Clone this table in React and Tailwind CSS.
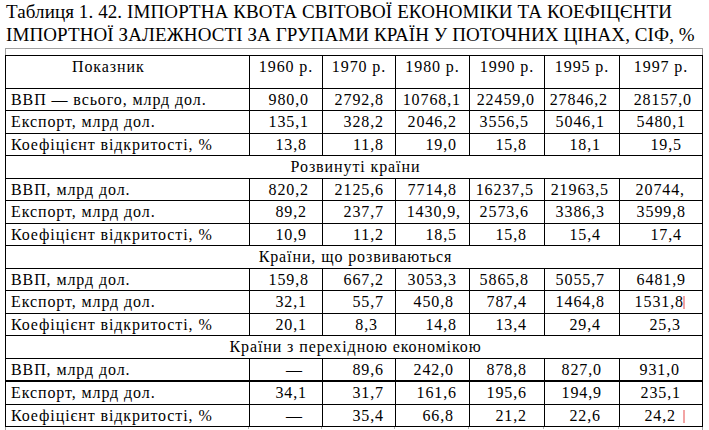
import React from "react";

const GRID = "grid grid-cols-[244px_73px_73px_74px_75px_75px_83px]";
const DEF = ["pr-[13px]", "pr-[11px]", "pr-[12px]", "pr-[15px]", "pr-[14px]", "pr-[16px]"];

const years = ["1960 р.", "1970 р.", "1980 р.", "1990 р.", "1995 р.", "1997 р."];

const sections = [
  {
    title: null,
    rows: [
      { label: "ВВП — всього, млрд дол.", h: "h-[22px]", vals: ["980,0", "2792,8", ["10768,1", "pr-[8px]"], ["22459,0", "pr-[9px]"], ["27846,2", "pr-[11px]"], ["28157,0", "pr-[10px]"]] },
      { label: "Експорт, млрд дол.", h: "h-[23px]", vals: ["135,1", "328,2", "2046,2", "3556,5", "5046,1", "5480,1"] },
      { label: "Коефіцієнт відкритості, %", h: "h-[22px]", vals: [["13,8", "pr-[15px]"], "11,8", "19,0", ["15,8", "pr-[17px]"], ["18,1", "pr-[18px]"], ["19,5", "pr-[20px]"]] },
    ],
  },
  {
    title: "Розвинуті країни",
    rows: [
      { label: "ВВП, млрд дол.", h: "h-[22px]", vals: ["820,2", "2125,6", "7714,8", ["16237,5", "pr-[10px]"], ["21963,5", "pr-[10px]"], ["20744,", "pr-[17px]"]] },
      { label: "Експорт, млрд дол.", h: "h-[23px]", vals: [["89,2", "pr-[15px]"], "237,7", ["1430,9,", "pr-[8px]"], "2573,6", "3386,3", "3599,8"] },
      { label: "Коефіцієнт відкритості, %", h: "h-[22px]", vals: [["10,9", "pr-[15px]"], "11,2", "18,5", ["15,8", "pr-[17px]"], ["15,4", "pr-[18px]"], ["17,4", "pr-[20px]"]] },
    ],
  },
  {
    title: "Країни, що розвиваються",
    rows: [
      { label: "ВВП, млрд дол.", h: "h-[22px]", vals: ["159,8", "667,2", "3053,3", "5865,8", "5055,7", "6481,9"] },
      { label: "Експорт, млрд дол.", h: "h-[23px]", mark: true, vals: [["32,1", "pr-[15px]"], "55,7", ["450,8", "pr-[15px]"], ["787,4", "pr-[17px]"], "1464,8", ["1531,8", "pr-[18px]"]] },
      { label: "Коефіцієнт відкритості, %", h: "h-[22px]", vals: [["20,1", "pr-[15px]"], ["8,3", "pr-[17px]"], "14,8", ["13,4", "pr-[17px]"], ["29,4", "pr-[18px]"], ["25,3", "pr-[21px]"]] },
    ],
  },
  {
    title: "Країни з перехідною економікою",
    rows: [
      { label: "ВВП, млрд дол.", h: "h-[23px]", thick: true, vals: [["—", "pr-[19px]"], "89,6", ["242,0", "pr-[15px]"], ["878,8", "pr-[17px]"], ["827,0", "pr-[17px]"], ["931,0", "pr-[22px]"]] },
      { label: "Експорт, млрд дол.", h: "h-[23px]", vals: [["34,1", "pr-[15px]"], "31,7", "161,6", ["195,6", "pr-[17px]"], ["194,9", "pr-[17px]"], ["235,1", "pr-[21px]"]] },
      { label: "Коефіцієнт відкритості, %", h: "h-[22px]", mark: true, vals: [["—", "pr-[19px]"], "35,4", ["66,8", "pr-[15px]"], ["21,2", "pr-[17px]"], ["22,6", "pr-[18px]"], ["24,2", "pr-[26px]"]] },
    ],
  },
];

const sectionHeights = ["h-[23px]", "h-[23px]", "h-[23px]"];

function DataRow({ row }) {
  const b = row.thick ? "border-b-2" : "border-b";
  return (
    <div className={`${GRID} ${row.h}`}>
      <div className={`flex items-center border-r ${b} border-black pl-[5px]`}>{row.label}</div>
      {row.vals.map((v, i) => {
        const text = Array.isArray(v) ? v[0] : v;
        const pr = Array.isArray(v) ? v[1] : DEF[i];
        return (
          <div key={i} className={`relative flex items-center justify-end border-r ${b} border-black ${pr}`}>
            {text}
            {row.mark && i === 5 ? (
              <span className="absolute left-[63px] top-[5px] h-[13px] w-[2px] bg-[#f3a4a4]" />
            ) : null}
          </div>
        );
      })}
    </div>
  );
}

export default function App() {
  return (
    <div className="h-[430px] w-[709px] overflow-hidden bg-white text-black font-['Liberation_Serif']">
      <div className="pl-[6px] text-[19px] leading-[23px] tracking-[0.1px]">
        <div>Таблиця 1. 42. ІМПОРТНА КВОТА СВІТОВОЇ ЕКОНОМІКИ ТА КОЕФІЦЄНТИ</div>
        <div>ІМПОРТНОЇ ЗАЛЕЖНОСТІ ЗА ГРУПАМИ КРАЇН У ПОТОЧНИХ ЦІНАХ, СІФ, %</div>
      </div>
      <div className="ml-[5px] mt-[2px] h-[400px] w-[698px] border-x border-t border-[#a0a0a0] pt-[6px]">
        <div className="-ml-px w-[698px] border-l border-t border-black text-[16px] leading-[18px] tracking-[0.9px]">
          <div className={`${GRID} h-[33px]`}>
            <div className="border-r border-b border-black pl-[66px] pt-[2px]">Показник</div>
            {years.map((y) => (
              <div key={y} className="border-r border-b border-black pt-[2px] text-center">
                {y}
              </div>
            ))}
          </div>
          {sections.map((s, si) => (
            <React.Fragment key={si}>
              {s.title ? (
                <div className={`flex items-center justify-center border-r border-b border-black pl-[3px] ${sectionHeights[si - 1]}`}>
                  {s.title}
                </div>
              ) : null}
              {s.rows.map((r, ri) => (
                <DataRow key={ri} row={r} />
              ))}
            </React.Fragment>
          ))}
        </div>
        <div className={`-ml-px w-[698px] ${GRID} h-[6px]`}>
          <div className="border-r border-dotted border-[#b0b0b0]" />
          <div className="border-r border-dotted border-[#b0b0b0]" />
          <div className="border-r border-dotted border-[#b0b0b0]" />
          <div className="border-r border-dotted border-[#b0b0b0]" />
          <div className="border-r border-dotted border-[#b0b0b0]" />
          <div className="border-r border-dotted border-[#b0b0b0]" />
          <div />
        </div>
      </div>
    </div>
  );
}
